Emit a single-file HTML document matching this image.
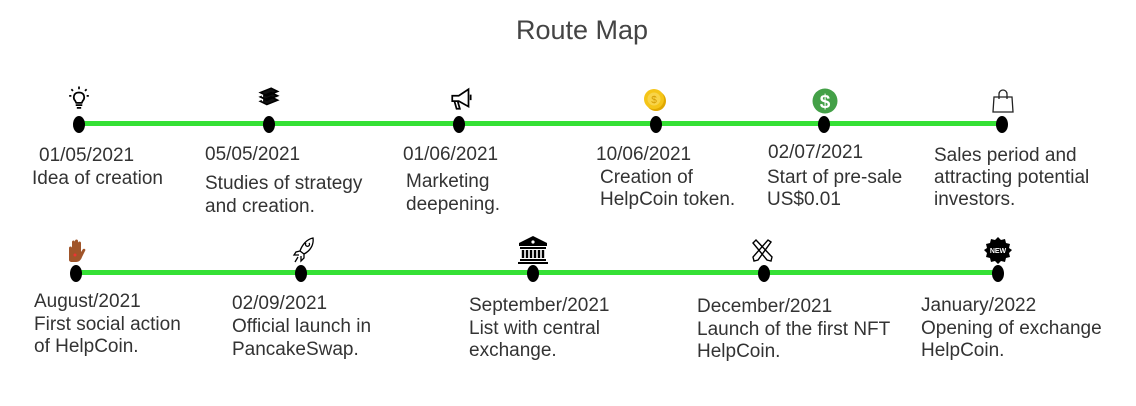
<!DOCTYPE html>
<html><head><meta charset="utf-8"><style>
body{margin:0;width:1136px;height:406px;background:#fff;position:relative;overflow:hidden;font-family:"Liberation Sans",Arial,sans-serif;color:#333}
.t{position:absolute;font-size:19px;line-height:22px;white-space:nowrap}
.line{position:absolute;height:5px;background:#35e035}
.dot{position:absolute;width:12px;height:17px;border-radius:50%;background:#000}
svg{position:absolute}
</style></head><body>
<div class="t" style="left:0;width:1164px;text-align:center;top:15px;font-size:27px;line-height:30px;color:#444">Route Map</div>

<div class="line" style="left:79px;width:923px;top:121px"></div>
<div class="dot" style="left:73px;top:116px"></div>
<div class="dot" style="left:263px;top:116px"></div>
<div class="dot" style="left:453px;top:116px"></div>
<div class="dot" style="left:650px;top:116px"></div>
<div class="dot" style="left:818px;top:116px"></div>
<div class="dot" style="left:996px;top:116px"></div>

<div class="line" style="left:76px;width:922px;top:270px"></div>
<div class="dot" style="left:70px;top:265px"></div>
<div class="dot" style="left:295px;top:265px"></div>
<div class="dot" style="left:527px;top:265px"></div>
<div class="dot" style="left:758px;top:265px"></div>
<div class="dot" style="left:992px;top:265px"></div>

<svg style="left:67px;top:86px" width="24" height="24" viewBox="0 0 22 22" fill="none" stroke="#000" stroke-width="1.6"><path d="M7.5 13.5c-2-2-2-7.5 3.5-7.5s5.5 5.5 3.5 7.5l-1 2h-5z M8 17.5h6 M9 20h4"/><path d="M2 9h2M18 9h2M4 3l1.5 1.5M18 3l-1.5 1.5M11 0.5v2.5"/></svg>
<svg style="left:257px;top:87px" width="24" height="22" viewBox="0 0 22 20"><path d="M3 5l10-4 6 3-10 4z M3 9l10-4 6 3-10 4z M3 13l10-4 6 3-10 4z" fill="#111" stroke="#000" stroke-width="1.4"/><path d="M5 7v2M5 11v2M5 15v2" stroke="#fff" stroke-width="1.2"/></svg>
<svg style="left:449px;top:87px" width="26" height="24" viewBox="0 0 24 22" fill="none" stroke="#000" stroke-width="1.6"><path d="M3 8h6l9-6v16l-9-5H3z M5 13l2 7h3l-2-7 M20 7v5"/></svg>
<svg style="left:643px;top:88px" width="24" height="24" viewBox="0 0 24 24"><circle cx="13" cy="13" r="10" fill="#e0a800"/><circle cx="11" cy="11" r="10" fill="#f5c518"/><circle cx="11" cy="11" r="6.5" fill="#f8d44a"/><text x="11" y="15" font-size="10" text-anchor="middle" fill="#d49b00" font-family="Liberation Sans">$</text></svg>
<svg style="left:812px;top:88px" width="26" height="26" viewBox="0 0 26 26"><circle cx="13" cy="13" r="12.5" fill="#43a047"/><text x="13" y="20" font-size="19" font-weight="bold" text-anchor="middle" fill="#fff" font-family="Liberation Sans">$</text></svg>
<svg style="left:991px;top:89px" width="24" height="25" viewBox="0 0 24 25" fill="none" stroke="#222" stroke-width="1.3"><path d="M3 8h18l1 15H2z M8 10V5a4 4 0 018 0v5"/></svg>

<svg style="left:64px;top:238px" width="24" height="26" viewBox="0 0 24 26"><path d="M5 24V10c0-2 3-2 3 0V4c0-2 3-2 3 0v-1c0-2 3-2 3 0v2c0-2 3-2 3 0v9l2-3c2-1 3 1 2 2l-3 6c-1 3-3 5-6 5H8c-2 0-3-1-3-2z" fill="#a0552a"/><circle cx="11" cy="17" r="1.5" fill="#e33"/></svg>
<svg style="left:291px;top:236px" width="26" height="28" viewBox="0 0 26 28" fill="none" stroke="#000" stroke-width="1.3"><path d="M22 2c-6 1-11 7-13 13l4 3c6-3 10-9 9-16z M9 15l-4 1-2 3 5 0 M13 18l0 4 -3 3 0-5 M7 21l-3 5 M15 7a2 2 0 103 0"/></svg>
<svg style="left:517px;top:235px" width="32" height="29" viewBox="0 0 32 29"><path d="M16 1L2 8v3h28V8z" fill="#000"/><circle cx="16" cy="7" r="1.6" fill="#fff"/><rect x="3" y="12" width="26" height="2" fill="#000"/><path d="M6 15v8M10 15v8M14 15v8M18 15v8M22 15v8M26 15v8" stroke="#000" stroke-width="2.4"/><rect x="3" y="24" width="26" height="2" fill="#000"/><rect x="1" y="27" width="30" height="2" fill="#000"/></svg>
<svg style="left:750px;top:238px" width="24" height="25" viewBox="0 0 24 25" fill="none" stroke="#000" stroke-width="1.4"><path d="M3 5l3-3 16 17-1 4-4-1z M21 4l-3-2-15 17 1 4 4-1z"/></svg>
<svg style="left:984px;top:236px" width="28" height="28" viewBox="0 0 28 28"><path d="M14 1l3 3 4-1 1 4 4 1-1 4 3 2-3 3 1 4-4 1-1 4-4-1-3 3-3-3-4 1-1-4-4-1 1-4-3-3 3-2-1-4 4-1 1-4 4 1z" fill="#000"/><text x="14" y="17" font-size="7" font-weight="bold" text-anchor="middle" fill="#fff" font-family="Liberation Sans">NEW</text></svg>

<div class="t" style="left:39px;top:145px">01/05/2021</div>
<div class="t" style="left:32px;top:168px">Idea of creation</div>
<div class="t" style="left:205px;top:144px">05/05/2021</div>
<div class="t" style="left:205px;top:172px;line-height:23px">Studies of strategy<br>and creation.</div>
<div class="t" style="left:403px;top:144px">01/06/2021</div>
<div class="t" style="left:406px;top:170px;line-height:23px">Marketing<br>deepening.</div>
<div class="t" style="left:596px;top:144px">10/06/2021</div>
<div class="t" style="left:600px;top:167px;line-height:22px">Creation of<br>HelpCoin token.</div>
<div class="t" style="left:768px;top:142px">02/07/2021</div>
<div class="t" style="left:767px;top:167px;line-height:22px">Start of pre-sale<br>US$0.01</div>
<div class="t" style="left:934px;top:145px;line-height:22px">Sales period and<br>attracting potential<br>investors.</div>

<div class="t" style="left:34px;top:291px;line-height:22.5px">August/2021<br>First social action<br>of HelpCoin.</div>
<div class="t" style="left:232px;top:292px;line-height:23px">02/09/2021<br>Official launch in<br>PancakeSwap.</div>
<div class="t" style="left:469px;top:295px;line-height:22.5px">September/2021<br>List with central<br>exchange.</div>
<div class="t" style="left:697px;top:296px;line-height:22.5px">December/2021<br>Launch of the first NFT<br>HelpCoin.</div>
<div class="t" style="left:921px;top:295px;line-height:22.5px">January/2022<br>Opening of exchange<br>HelpCoin.</div>
</body></html>
